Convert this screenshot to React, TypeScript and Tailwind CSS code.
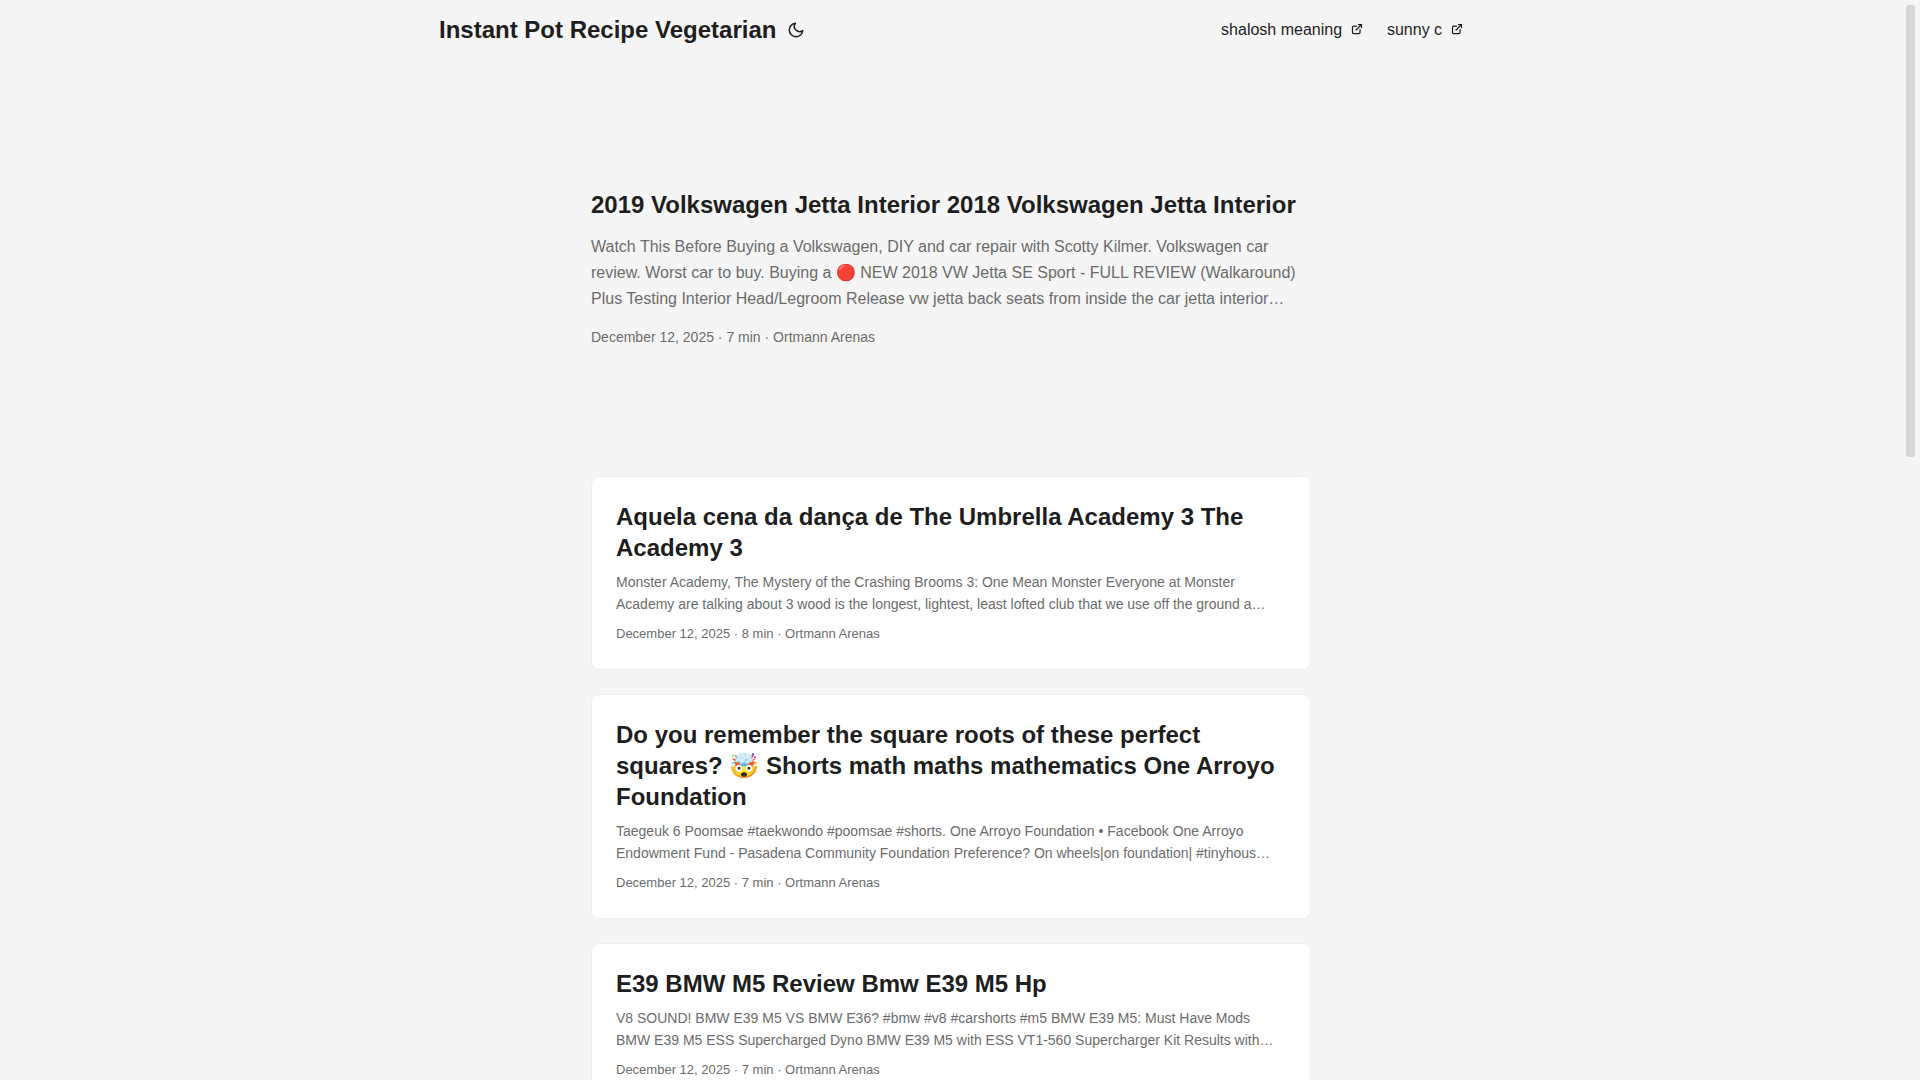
type Post = { title: string; summary: string; meta: string };

const menu = ['shalosh meaning', 'sunny c'];

const featured: Post = {
  title: '2019 Volkswagen Jetta Interior 2018 Volkswagen Jetta Interior',
  summary:
    'Watch This Before Buying a Volkswagen, DIY and car repair with Scotty Kilmer. Volkswagen car review. Worst car to buy. Buying a 🔴 NEW 2018 VW Jetta SE Sport - FULL REVIEW (Walkaround) Plus Testing Interior Head/Legroom Release vw jetta back seats from inside the car jetta interior…',
  meta: 'December 12, 2025 · 7 min · Ortmann Arenas',
};

const posts: Post[] = [
  {
    title: 'Aquela cena da dança de The Umbrella Academy 3 The Academy 3',
    summary:
      'Monster Academy, The Mystery of the Crashing Brooms 3: One Mean Monster Everyone at Monster Academy are talking about 3 wood is the longest, lightest, least lofted club that we use off the ground a…',
    meta: 'December 12, 2025 · 8 min · Ortmann Arenas',
  },
  {
    title:
      'Do you remember the square roots of these perfect squares? 🤯 Shorts math maths mathematics One Arroyo Foundation',
    summary:
      'Taegeuk 6 Poomsae #taekwondo #poomsae #shorts. One Arroyo Foundation • Facebook One Arroyo Endowment Fund - Pasadena Community Foundation Preference? On wheels|on foundation| #tinyhous…',
    meta: 'December 12, 2025 · 7 min · Ortmann Arenas',
  },
  {
    title: 'E39 BMW M5 Review Bmw E39 M5 Hp',
    summary:
      'V8 SOUND! BMW E39 M5 VS BMW E36? #bmw #v8 #carshorts #m5 BMW E39 M5: Must Have Mods BMW E39 M5 ESS Supercharged Dyno BMW E39 M5 with ESS VT1-560 Supercharger Kit Results with…',
    meta: 'December 12, 2025 · 7 min · Ortmann Arenas',
  },
];

function MoonIcon() {
  return (
    <svg
      className="h-[18px] w-6"
      viewBox="0 0 24 24"
      fill="none"
      stroke="currentColor"
      strokeWidth="2"
      strokeLinecap="round"
      strokeLinejoin="round"
      aria-hidden="true"
    >
      <path d="M21 12.79A9 9 0 1 1 11.21 3 7 7 0 0 0 21 12.79z" />
    </svg>
  );
}

function ExternalIcon() {
  return (
    <svg
      className="inline size-3 align-baseline"
      viewBox="0 0 24 24"
      fill="none"
      stroke="currentColor"
      strokeWidth="2.5"
      strokeLinecap="round"
      strokeLinejoin="round"
      shapeRendering="geometricPrecision"
      aria-hidden="true"
    >
      <path d="M18 13v6a2 2 0 01-2 2H5a2 2 0 01-2-2V8a2 2 0 012-2h6" />
      <path d="M15 3h6v6" />
      <path d="M10 14L21 3" />
    </svg>
  );
}

function Header() {
  return (
    <header>
      <nav className="mx-auto flex max-w-[1072px] justify-between px-6 leading-[60px]">
        <div className="flex items-center">
          <a href="#" className="text-2xl leading-[60px] font-bold">
            Instant Pot Recipe Vegetarian
          </a>
          <button type="button" aria-label="Toggle theme" className="ml-2">
            <MoonIcon />
          </button>
        </div>
        <ul className="flex gap-6 text-base leading-[60px]">
          {menu.map((label) => (
            <li key={label}>
              <a href="#">
                {label}&nbsp;&nbsp;
                <ExternalIcon />
              </a>
            </li>
          ))}
        </ul>
      </nav>
    </header>
  );
}

function FeaturedPost({ post }: { post: Post }) {
  return (
    <article className="mt-6 mb-12 flex min-h-80 flex-col justify-center">
      <h1 className="text-2xl leading-[31px] font-bold">
        <a href="#">{post.title}</a>
      </h1>
      <p className="my-[14px] line-clamp-3 text-base leading-[26px] text-[#6c6c6c]">{post.summary}</p>
      <footer className="text-sm leading-[22px] text-[#6c6c6c]">{post.meta}</footer>
    </article>
  );
}

function PostCard({ post }: { post: Post }) {
  return (
    <article className="mb-6 rounded-lg border border-[#eeeeee] bg-white p-6">
      <h2 className="text-2xl leading-[31px] font-bold">
        <a href="#">{post.title}</a>
      </h2>
      <p className="my-2 line-clamp-2 text-sm leading-[22px] text-[#6c6c6c]">{post.summary}</p>
      <footer className="text-[13px] leading-[22px] text-[#6c6c6c]">{post.meta}</footer>
    </article>
  );
}

export default function App() {
  return (
    <div className="flex h-screen overflow-hidden bg-[#f5f5f5] font-[Arial,'Liberation_Sans',sans-serif] text-[#1e1e1e] [text-rendering:optimizeLegibility]">
      <div className="min-w-0 flex-1">
        <Header />
        <main className="mx-auto max-w-3xl p-6">
          <FeaturedPost post={featured} />
          {posts.map((post) => (
            <PostCard key={post.title} post={post} />
          ))}
        </main>
      </div>
      <div className="w-[18px] shrink-0 py-[5px] pr-[5px] pl-1" aria-hidden="true">
        <div className="h-[452px] rounded-[3px] bg-[#d6d6d6]" />
      </div>
    </div>
  );
}
